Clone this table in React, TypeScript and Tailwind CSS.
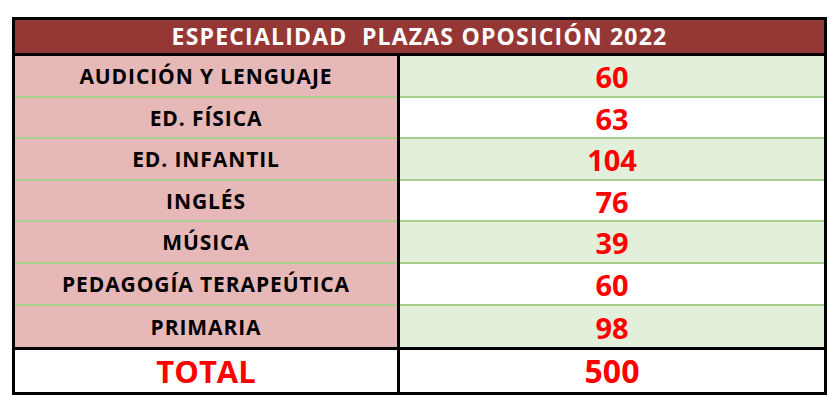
const rows = [
  { name: "AUDICIÓN Y LENGUAJE", value: 60 },
  { name: "ED. FÍSICA", value: 63 },
  { name: "ED. INFANTIL", value: 104 },
  { name: "INGLÉS", value: 76 },
  { name: "MÚSICA", value: 39 },
  { name: "PEDAGOGÍA TERAPEÚTICA", value: 60 },
  { name: "PRIMARIA", value: 98 },
]

export default function App() {
  return (
    <div className="h-[402px] w-[838px] bg-white pl-[12px] pt-[17px] font-['Open_Sans',sans-serif]">
      <div className="w-[815px] border-[3px] border-black">
        <div className="flex h-[36px] items-center justify-center border-b-[3px] border-black bg-[#953735] pb-[1px] text-[23px] font-bold tracking-[1.2px] text-white">
          ESPECIALIDAD&nbsp;&nbsp;PLAZAS OPOSICIÓN 2022
        </div>
        {rows.map((row, i) => (
          <div key={row.name} className="flex h-[41.6px]">
            <div
              className={`flex w-[382px] items-center justify-center bg-[#e6b8b7] pt-[2px] text-[21px] font-bold tracking-[0.9px] text-black ${
                i < rows.length - 1 ? "border-b-2 border-[#a9d08e]" : ""
              }`}
            >
              {row.name}
            </div>
            <div
              className={`flex flex-1 items-center justify-center border-l-[3px] border-black text-[29px] font-bold text-[#ff0000] ${
                i % 2 === 0 ? "bg-[#e2efda]" : "bg-white"
              }`}
            >
              <span
                className={`flex h-full w-full items-center justify-center pt-[2px] ${
                  i < rows.length - 1 ? "border-b-2 border-[#a9d08e]" : ""
                }`}
              >
                {row.value}
              </span>
            </div>
          </div>
        ))}
        <div className="flex h-[45px] border-t-[3px] border-black">
          <div className="flex w-[382px] items-center justify-center text-[31px] font-bold text-[#ff0000]">
            TOTAL
          </div>
          <div className="flex flex-1 items-center justify-center border-l-[3px] border-black text-[32px] font-bold text-[#ff0000]">
            500
          </div>
        </div>
      </div>
    </div>
  )
}
